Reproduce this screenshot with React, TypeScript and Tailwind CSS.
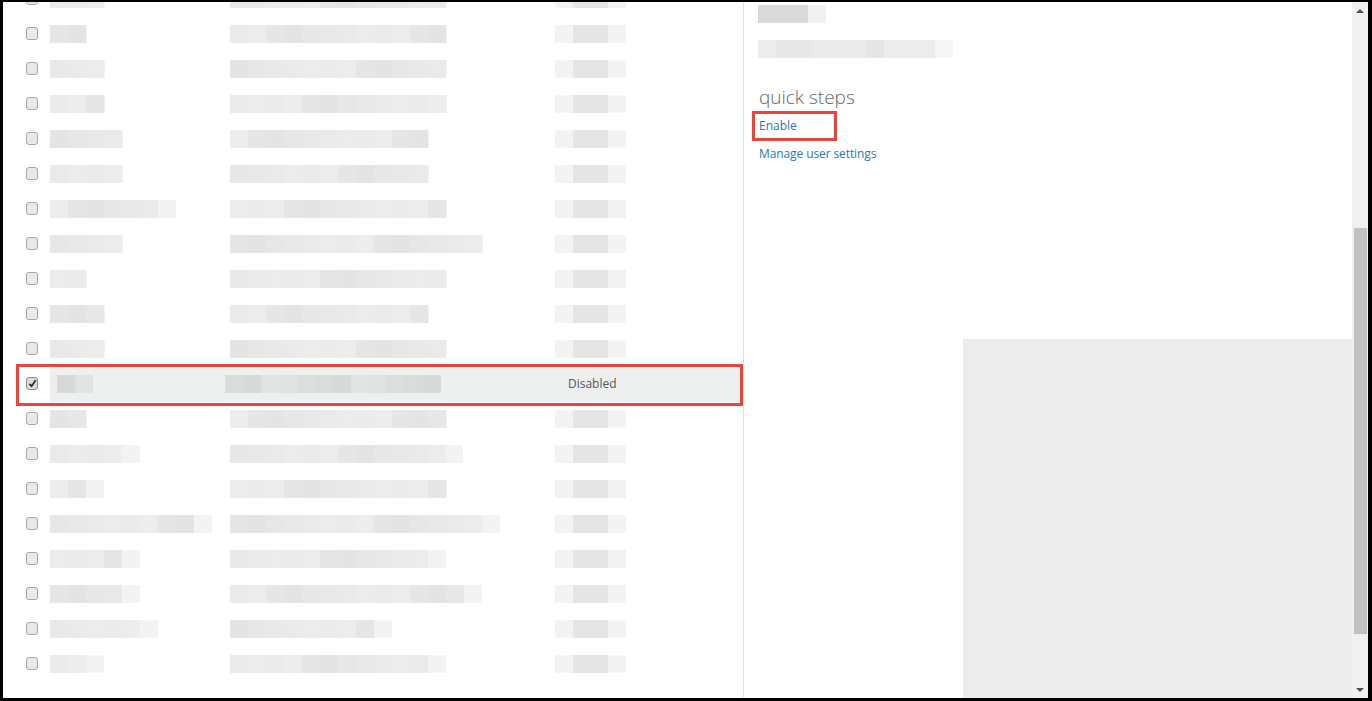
import React from 'react'

type Row = { a: number; b: number; sel?: boolean }

// widths of the blurred cells, column 1 and column 2
const rows: Row[] = [
  { a: 55, b: 217 },
  { a: 37, b: 217 },
  { a: 55, b: 217 },
  { a: 55, b: 217 },
  { a: 73, b: 199 },
  { a: 73, b: 199 },
  { a: 126, b: 217 },
  { a: 73, b: 253 },
  { a: 37, b: 217 },
  { a: 55, b: 199 },
  { a: 55, b: 217 },
  { a: 36, b: 216, sel: true },
  { a: 37, b: 217 },
  { a: 90, b: 233 },
  { a: 54, b: 217 },
  { a: 162, b: 270 },
  { a: 90, b: 216 },
  { a: 90, b: 252 },
  { a: 108, b: 162 },
  { a: 54, b: 216 },
]

const shades = ['#ececec', '#e6e6e6', '#e9e9e9', '#ebebeb', '#e4e4e4', '#eaeaea', '#ededed', '#e7e7e7']
const darkShades = ['#dcdedd', '#d7d9d8', '#e0e2e1', '#dadcdb', '#e2e4e3']

function Blur({ w, seed = 0, h = 18, dark }: { w: number; seed?: number; h?: number; dark?: boolean }) {
  const n = Math.ceil(w / 18)
  const pal = dark ? darkShades : shades
  return (
    <div className="flex overflow-hidden" style={{ width: w, height: h }}>
      {Array.from({ length: n }).map((_, i) => (
        <div
          key={i}
          className="h-full shrink-0"
          style={{
            width: 18,
            background: i === n - 1 && !dark ? '#f3f3f3' : pal[(i * 3 + seed) % pal.length],
          }}
        />
      ))}
    </div>
  )
}

function Checkbox({ checked }: { checked?: boolean }) {
  return (
    <div
      className={
        'w-[12px] h-[13px] rounded-[3px] border flex items-center justify-center ' +
        (checked ? 'border-[#8a8a8a] bg-[#dcdcdc]' : 'border-[#a6a6a6] bg-[#e9e9e9]')
      }
    >
      {checked && (
        <svg width="9" height="9" viewBox="0 0 10 10">
          <path d="M1.5 5.5 L4 8 L8.5 1.5" fill="none" stroke="#2b2b2b" strokeWidth="2" />
        </svg>
      )}
    </div>
  )
}

function ListRow({ r, i }: { r: Row; i: number }) {
  if (r.sel) {
    return (
      <div className="relative flex items-center h-[35px] shrink-0">
        <div className="w-[47px] pl-[23px] flex items-center h-full">
          <Checkbox checked />
        </div>
        <div className="flex-1 h-[36px] bg-[#eef0ef] flex items-center">
          <div className="w-[175px] pl-[7px]">
            <Blur w={r.a} seed={i} dark />
          </div>
          <div className="w-[343px]">
            <Blur w={r.b} seed={i + 2} dark />
          </div>
          <span className="text-[12px] text-[#555]">Disabled</span>
        </div>
        <div className="absolute left-[13px] right-0 -top-[2px] -bottom-[5px] border-[3px] border-[#e8453c] pointer-events-none" />
      </div>
    )
  }
  return (
    <div className="flex items-center h-[35px] shrink-0">
      <div className="w-[47px] pl-[23px] flex items-center h-full">
        <Checkbox />
      </div>
      <div className="w-[180px]">
        <Blur w={r.a} seed={i} />
      </div>
      <div className="w-[325px]">
        <Blur w={r.b} seed={i + 2} />
      </div>
      <div className="flex w-[71px] h-[18px]">
        <div className="w-[18px] bg-[#f3f3f3]" />
        <div className="w-[35px] bg-[#e5e5e5]" />
        <div className="w-[18px] bg-[#f3f3f3]" />
      </div>
    </div>
  )
}

export default function App() {
  return (
    <div
      className="w-[1372px] h-[701px] bg-white border-black border-l-[3px] border-t-2 border-r-4 border-b-[3px] flex overflow-hidden"
      style={{ fontFamily: '"Segoe UI", "Open Sans", "Noto Sans", sans-serif' }}
    >
      {/* list pane */}
      <div className="w-[741px] h-full border-r border-[#d9e0e3] overflow-hidden flex flex-col">
        <div className="flex flex-col mt-[-21px]">
          {rows.map((r, i) => (
            <ListRow key={i} r={r} i={i} />
          ))}
        </div>
      </div>

      {/* detail pane */}
      <div className="w-[608px] h-full flex flex-col">
        <div className="pl-[14px] pt-[3px] flex flex-col">
          <div className="flex h-[18px]">
            <div className="w-[50px] bg-[#dadada]" />
            <div className="w-[18px] bg-[#f1f1f1]" />
          </div>
          <div className="mt-[17px] flex h-[18px]">
            <div className="w-[177px] flex">
              <div className="w-[18px] bg-[#ededed]" />
              <div className="w-[36px] bg-[#e8e8e8]" />
              <div className="w-[54px] bg-[#ebebeb]" />
              <div className="w-[18px] bg-[#e6e6e6]" />
              <div className="w-[51px] bg-[#ececec]" />
            </div>
            <div className="w-[18px] bg-[#f6f6f6]" />
          </div>
          <div className="mt-[26px] text-[19px] font-light text-[#666] leading-[26px] pl-[1px]">
            quick steps
          </div>
          <div className="relative mt-[2px] text-[12px] leading-[28px] text-[#2a76b4] pl-[1px]">
            Enable
            <div className="absolute -left-[6px] w-[85px] top-[-1px] h-[30px] border-[3px] border-[#e8453c]" />
          </div>
          <div className="text-[12px] leading-[28px] text-[#2a76b4] pl-[1px] tracking-[-0.1px]">
            Manage user settings
          </div>
        </div>
        <div className="mt-auto ml-auto w-[389px] h-[359px] bg-[#ececec]" />
      </div>

      {/* scrollbar */}
      <div className="w-[16px] h-full bg-[#f0f0f0] flex flex-col items-center">
        <div className="h-[17px] flex items-center justify-center">
          <div className="w-0 h-0 border-l-[4px] border-r-[4px] border-b-[4px] border-l-transparent border-r-transparent border-b-[#505050]" />
        </div>
        <div className="mt-[209px] w-[13px] h-[406px] bg-[#c1c1c1]" />
        <div className="mt-auto h-[17px] flex items-center justify-center">
          <div className="w-0 h-0 border-l-[4px] border-r-[4px] border-t-[4px] border-l-transparent border-r-transparent border-t-[#505050]" />
        </div>
      </div>
    </div>
  )
}
